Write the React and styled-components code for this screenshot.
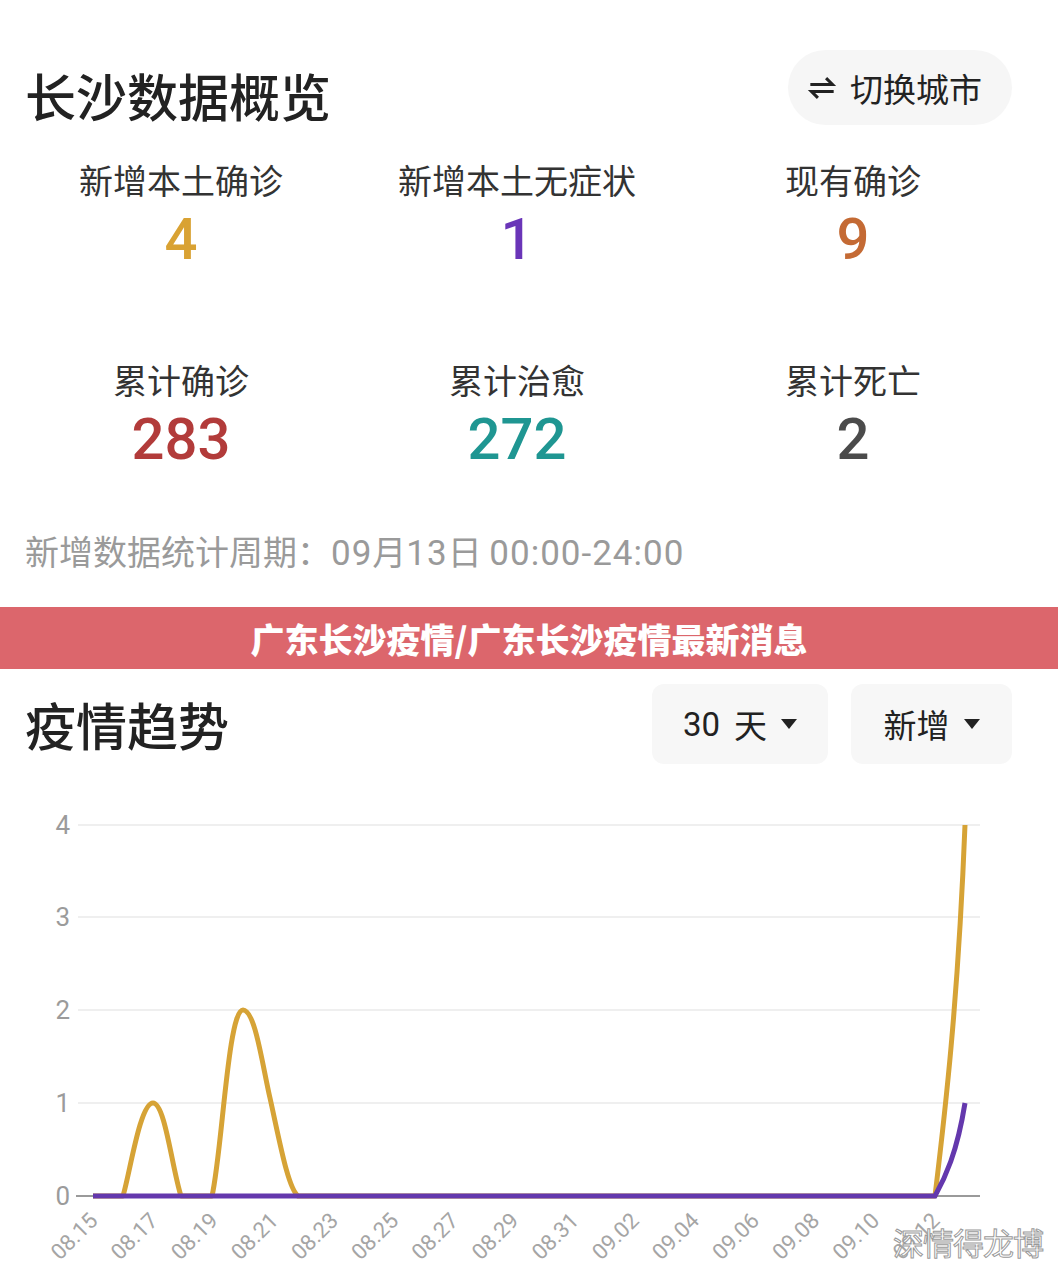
import React from 'react'
import styled, { createGlobalStyle } from 'styled-components'

const GlobalStyle = createGlobalStyle`
  html, body { margin: 0; padding: 0; background: #fff; }
  body { font-family: "Noto Sans CJK SC", "Noto Sans", sans-serif; color: #222; }
`

const Page = styled.div`
  width: 1058px;
  height: 1270px;
  overflow: hidden;
  background: #fff;
`

const Overview = styled.section`
  padding: 50px 46px 0 25px;
`

const HeaderRow = styled.div`
  display: flex;
  justify-content: space-between;
  align-items: center;
  height: ${p => p.$h || 75}px;
`

const Title = styled.h1`
  margin: 0;
  padding-top: ${p => p.$pt || 0}px;
  font-size: 51px;
  font-weight: 500;
  line-height: 60px;
  color: #222;
`

const SwitchPill = styled.div`
  display: flex;
  align-items: center;
  gap: 13px;
  width: 224px;
  height: 75px;
  box-sizing: border-box;
  padding-left: 19px;
  border-radius: 38px;
  background: #f6f6f6;
  font-size: 33px;
  color: #222;
`

const StatsGrid = styled.div`
  display: grid;
  grid-template-columns: repeat(3, 336px);
  row-gap: 91px;
  margin: 35px 0 0 -12px;
`

const Cell = styled.div`
  display: flex;
  flex-direction: column;
  align-items: center;
  gap: 9px;
`

const Label = styled.div`
  font-size: 34px;
  line-height: 40px;
  color: #333;
`

const Num = styled.div`
  font-family: Roboto, "DejaVu Sans", sans-serif;
  font-size: 58px;
  font-weight: 500;
  line-height: 60px;
  color: ${p => p.$color};
`

const Footnote = styled.div`
  margin-top: 62px;
  font-size: 34px;
  line-height: 40px;
  color: #9a9a9a;
  span { font-family: Roboto, sans-serif; font-size: 35px; letter-spacing: 1px; }
`

const Banner = styled.div`
  margin-top: 33px;
  height: 62px;
  background: #dc666c;
  display: flex;
  align-items: center;
  justify-content: center;
  color: #fff;
  font-size: 34px;
  font-weight: 900;
`

const Trend = styled.section`
  padding: 15px 46px 0 25px;
`

const Dropdowns = styled.div`
  display: flex;
  gap: 23px;
`

const Dropdown = styled.div`
  width: ${p => p.$w}px;
  height: 80px;
  box-sizing: border-box;
  border-radius: 12px;
  background: #f7f7f7;
  display: flex;
  align-items: center;
  justify-content: center;
  gap: 14px;
  font-size: 33px;
  color: #222;
  span.num { font-family: Roboto, sans-serif; }
`

const Caret = styled.span`
  width: 0;
  height: 0;
  border-left: 8px solid transparent;
  border-right: 8px solid transparent;
  border-top: 10px solid #222;
`

const ChartWrap = styled.div`
  position: relative;
  height: 509px;
  svg { display: block; }
`

const Watermark = styled.div`
  position: absolute;
  left: 893px;
  top: 455px;
  font-size: 31px;
  color: #fff;
  -webkit-text-stroke: 1px #9a9a9a;
  letter-spacing: -1px;
`

const SwapIcon = () => (
  <svg width="30" height="28" viewBox="0 0 24 24" fill="none" stroke="#222" strokeWidth="2.6" strokeLinecap="butt">
    <path d="M2 9 H21 L15.5 3.5" />
    <path d="M22 15 H3 L8.5 20.5" />
  </svg>
)

const stats = [
  { label: '新增本土确诊', value: '4', color: '#d9a233' },
  { label: '新增本土无症状', value: '1', color: '#6a35b8' },
  { label: '现有确诊', value: '9', color: '#c46a34' },
  { label: '累计确诊', value: '283', color: '#b23b3a' },
  { label: '累计治愈', value: '272', color: '#1f9692' },
  { label: '累计死亡', value: '2', color: '#4b4b4b' },
]

const xLabels = ['08.15', '08.17', '08.19', '08.21', '08.23', '08.25', '08.27', '08.29', '08.31', '09.02', '09.04', '09.06', '09.08', '09.10', '09.12']
const yTicks = [
  { v: '4', y: 822 },
  { v: '3', y: 914 },
  { v: '2', y: 1007 },
  { v: '1', y: 1100 },
]
const dayX = d => 93 + d * 30.07

function Chart() {
  return (
    <svg width="1058" height="509" viewBox="0 761 1058 509">
      {yTicks.map(t => (
        <g key={t.v}>
          <line x1="78" x2="980" y1={t.y} y2={t.y} stroke="#efefef" strokeWidth="2" />
          <text x="70" y={t.y + 9} textAnchor="end" fontFamily="Roboto, sans-serif" fontSize="26" fill="#9b9b9b">{t.v}</text>
        </g>
      ))}
      <line x1="76" x2="980" y1="1193" y2="1193" stroke="#9a9a9a" strokeWidth="2" />
      <text x="70" y="1202" textAnchor="end" fontFamily="Roboto, sans-serif" fontSize="26" fill="#9b9b9b">0</text>
      {xLabels.map((l, i) => {
        const x = dayX(i * 2) + 6
        return (
          <text key={l} x={x} y="1219" textAnchor="end" fontFamily="Roboto, sans-serif" fontSize="22" fill="#a5a5a5" transform={`rotate(-45 ${x} 1219)`}>{l}</text>
        )
      })}
      <path
        d="M93,1193 L123,1193 C130,1170 140,1100 153,1100 C165,1100 172,1165 181,1193 L212,1193 C222,1150 228,1007 243,1007 C255,1007 262,1060 270,1095 C280,1140 288,1185 298,1193 L935,1193 C945,1110 958,1000 965,822"
        fill="none" stroke="#d6a336" strokeWidth="5" strokeLinejoin="round"
      />
      <path
        d="M93,1193 L935,1193 C945,1175 957,1150 965,1100"
        fill="none" stroke="#6438ad" strokeWidth="5"
      />
    </svg>
  )
}

export default function App() {
  return (
    <Page>
      <GlobalStyle />
      <Overview>
        <HeaderRow>
          <Title $pt={14}>长沙数据概览</Title>
          <SwitchPill>
            <SwapIcon />
            切换城市
          </SwitchPill>
        </HeaderRow>
        <StatsGrid>
          {stats.map(s => (
            <Cell key={s.label}>
              <Label>{s.label}</Label>
              <Num $color={s.color}>{s.value}</Num>
            </Cell>
          ))}
        </StatsGrid>
        <Footnote>新增数据统计周期：<span>09</span>月<span>13</span>日 <span>00:00-24:00</span></Footnote>
      </Overview>
      <Banner>广东长沙疫情/广东长沙疫情最新消息</Banner>
      <Trend>
        <HeaderRow $h={80}>
          <Title>疫情趋势</Title>
          <Dropdowns>
            <Dropdown $w={176}><span className="num">30</span>天<Caret /></Dropdown>
            <Dropdown $w={161}>新增<Caret /></Dropdown>
          </Dropdowns>
        </HeaderRow>
      </Trend>
      <ChartWrap>
        <Chart />
        <Watermark>深情得龙博</Watermark>
      </ChartWrap>
    </Page>
  )
}
